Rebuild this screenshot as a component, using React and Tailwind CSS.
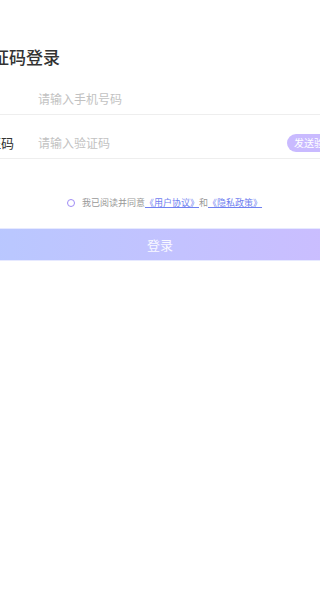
export default function App() {
  const font = { fontFamily: '"Noto Sans CJK SC", "Noto Sans", sans-serif' };
  return (
    <div className="w-[320px] h-[615px] overflow-hidden bg-white" style={font}>
      <div className="ml-[-25px] w-[370px] flex flex-col">
        <div className="pt-[44px] h-[71px]">
          <h1 className="text-[17px] leading-[26px] font-medium text-[#333333]">验证码登录</h1>
        </div>
        <div className="h-[44px] flex items-end pb-[6px] border-b border-[#eeeeee]">
          <span className="w-[63px] text-[13px] leading-[18px] text-[#333333]"></span>
          <span className="text-[12px] leading-[18px] text-[#c2c2c2]">请输入手机号码</span>
        </div>
        <div className="h-[44px] flex items-end pb-[6px] border-b border-[#eeeeee]">
          <span className="w-[63px] shrink-0 text-[13px] leading-[18px] text-[#333333]">验证码</span>
          <span className="flex-1 text-[12px] leading-[18px] text-[#c2c2c2]">请输入验证码</span>
          <span className="shrink-0 mr-[-6px] h-[18px] px-[7px] rounded-full bg-[#c9baff] text-white text-[10px] leading-[18px] whitespace-nowrap">发送验证码</span>
        </div>
        <div className="mt-[37px] h-[14px] flex items-center justify-center pl-[9px]">
          <span className="w-[8px] h-[8px] rounded-full border border-[#9f8cf5] mr-[7px]"></span>
          <span className="text-[9px] leading-[14px] text-[#999999] whitespace-nowrap">
            我已阅读并同意
            <span className="text-[#6f80f0] underline">《用户协议》</span>
            和
            <span className="text-[#6f80f0] underline">《隐私政策》</span>
          </span>
        </div>
        <div className="mt-[18px] h-[33px] bg-gradient-to-r from-[#b8c8ff] to-[#cbbdff] border-y border-[#e6e9ff] flex items-center justify-center">
          <span className="text-[13px] text-white/90">登录</span>
        </div>
      </div>
    </div>
  );
}
